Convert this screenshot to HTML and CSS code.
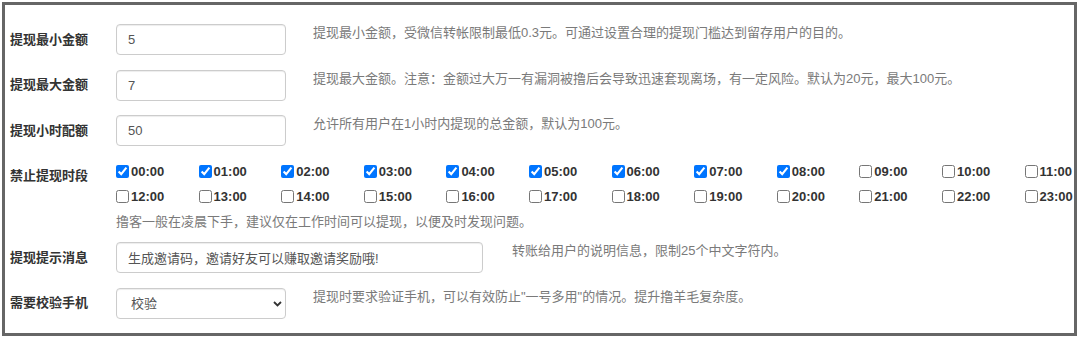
FILE: index.html
```html
<!DOCTYPE html>
<html lang="zh-CN">
<head>
<meta charset="utf-8">
<title>提现设置</title>
<link rel="stylesheet" href="styles.css">
</head>
<body>
<div class="panel">
  <div class="row">
    <label class="lbl">提现最小金额</label>
    <input class="fc" type="text" value="5">
    <p class="help">提现最小金额，受微信转帐限制最低0.3元。可通过设置合理的提现门槛达到留存用户的目的。</p>
  </div>
  <div class="row">
    <label class="lbl">提现最大金额</label>
    <input class="fc" type="text" value="7">
    <p class="help">提现最大金额。注意：金额过大万一有漏洞被撸后会导致迅速套现离场，有一定风险。默认为20元，最大100元。</p>
  </div>
  <div class="row">
    <label class="lbl">提现小时配额</label>
    <input class="fc" type="text" value="50">
    <p class="help">允许所有用户在1小时内提现的总金额，默认为100元。</p>
  </div>
  <div class="row row-times">
    <label class="lbl lbl-times">禁止提现时段</label>
    <div class="times-wrap">
      <div class="times">
        <label class="tm"><input type="checkbox" checked><span>00:00</span></label>
        <label class="tm"><input type="checkbox" checked><span>01:00</span></label>
        <label class="tm"><input type="checkbox" checked><span>02:00</span></label>
        <label class="tm"><input type="checkbox" checked><span>03:00</span></label>
        <label class="tm"><input type="checkbox" checked><span>04:00</span></label>
        <label class="tm"><input type="checkbox" checked><span>05:00</span></label>
        <label class="tm"><input type="checkbox" checked><span>06:00</span></label>
        <label class="tm"><input type="checkbox" checked><span>07:00</span></label>
        <label class="tm"><input type="checkbox" checked><span>08:00</span></label>
        <label class="tm"><input type="checkbox"><span>09:00</span></label>
        <label class="tm"><input type="checkbox"><span>10:00</span></label>
        <label class="tm"><input type="checkbox"><span>11:00</span></label>
        <label class="tm"><input type="checkbox"><span>12:00</span></label>
        <label class="tm"><input type="checkbox"><span>13:00</span></label>
        <label class="tm"><input type="checkbox"><span>14:00</span></label>
        <label class="tm"><input type="checkbox"><span>15:00</span></label>
        <label class="tm"><input type="checkbox"><span>16:00</span></label>
        <label class="tm"><input type="checkbox"><span>17:00</span></label>
        <label class="tm"><input type="checkbox"><span>18:00</span></label>
        <label class="tm"><input type="checkbox"><span>19:00</span></label>
        <label class="tm"><input type="checkbox"><span>20:00</span></label>
        <label class="tm"><input type="checkbox"><span>21:00</span></label>
        <label class="tm"><input type="checkbox"><span>22:00</span></label>
        <label class="tm"><input type="checkbox"><span>23:00</span></label>
      </div>
      <p class="help help-block">撸客一般在凌晨下手，建议仅在工作时间可以提现，以便及时发现问题。</p>
    </div>
  </div>
  <div class="row">
    <label class="lbl">提现提示消息</label>
    <input class="fc fc-wide" type="text" value="生成邀请码，邀请好友可以赚取邀请奖励哦!">
    <p class="help help-wide">转账给用户的说明信息，限制25个中文字符内。</p>
  </div>
  <div class="row">
    <label class="lbl">需要校验手机</label>
    <div class="sel-wrap">
      <select class="fc sel"><option>校验</option><option>不校验</option></select>
      <svg class="chev" width="9" height="6" viewBox="0 0 9 6"><path d="M1 1 L4.5 4.5 L8 1" fill="none" stroke="#333" stroke-width="1.8"/></svg>
    </div>
    <p class="help">提现时要求验证手机，可以有效防止"一号多用"的情况。提升撸羊毛复杂度。</p>
  </div>
</div>
</body>
</html>
```

FILE: styles.css
```css
html, body {
  margin: 0;
  background: #fff;
}
body {
  font-family: "Liberation Sans", "Noto Sans CJK SC", sans-serif;
  font-size: 13px;
}
.panel {
  margin: 2px 0 0 2px;
  width: 1075px;
  height: 334px;
  box-sizing: border-box;
  border: 3px solid #666;
  padding: 19px 0 0 0;
  overflow: hidden;
  background: #fff;
}
.row {
  display: flex;
  align-items: flex-start;
  margin-bottom: 14.5px;
}
.lbl {
  flex: none;
  width: 111px;
  box-sizing: border-box;
  padding: 5.5px 0 0 5px;
  font-weight: bold;
  font-size: 13px;
  line-height: 20px;
  color: #333;
}
.fc {
  flex: none;
  width: 170px;
  height: 31px;
  box-sizing: border-box;
  border: 1px solid #ccc;
  border-radius: 4px;
  padding: 0 11px;
  margin: 0;
  font-family: "Liberation Sans", "Noto Sans CJK SC", sans-serif;
  font-size: 13px;
  color: #555;
  background: #fff;
  box-shadow: inset 0 1px 1px rgba(0, 0, 0, 0.075);
  outline: none;
}
.fc-wide {
  width: 367px;
}
.help {
  margin: 0 0 0 27px;
  font-size: 13px;
  line-height: 18px;
  color: #7a7a7a;
  white-space: nowrap;
}
.help-wide {
  margin-left: 29px;
}
.row-times {
  margin-top: -2px;
  margin-bottom: 8.5px;
}
.lbl-times {
  padding-top: 7.5px;
}
.times-wrap {
  display: flex;
  flex-direction: column;
}
.times {
  display: grid;
  grid-template-columns: repeat(11, 82.6px) 49px;
  grid-auto-rows: 25px;
}
.tm {
  display: flex;
  align-items: center;
  font-weight: bold;
  font-size: 13px;
  color: #333;
  white-space: nowrap;
}
.tm input {
  width: 13px;
  height: 13px;
  margin: 0 2px 0 0;
  flex: none;
}
.help-block {
  margin: 0;
  line-height: 25px;
}
.sel-wrap {
  position: relative;
  flex: none;
}
.sel {
  display: block;
  appearance: none;
  -webkit-appearance: none;
  padding-left: 14px;
}
.chev {
  position: absolute;
  left: 157px;
  top: 13px;
  pointer-events: none;
}
```
